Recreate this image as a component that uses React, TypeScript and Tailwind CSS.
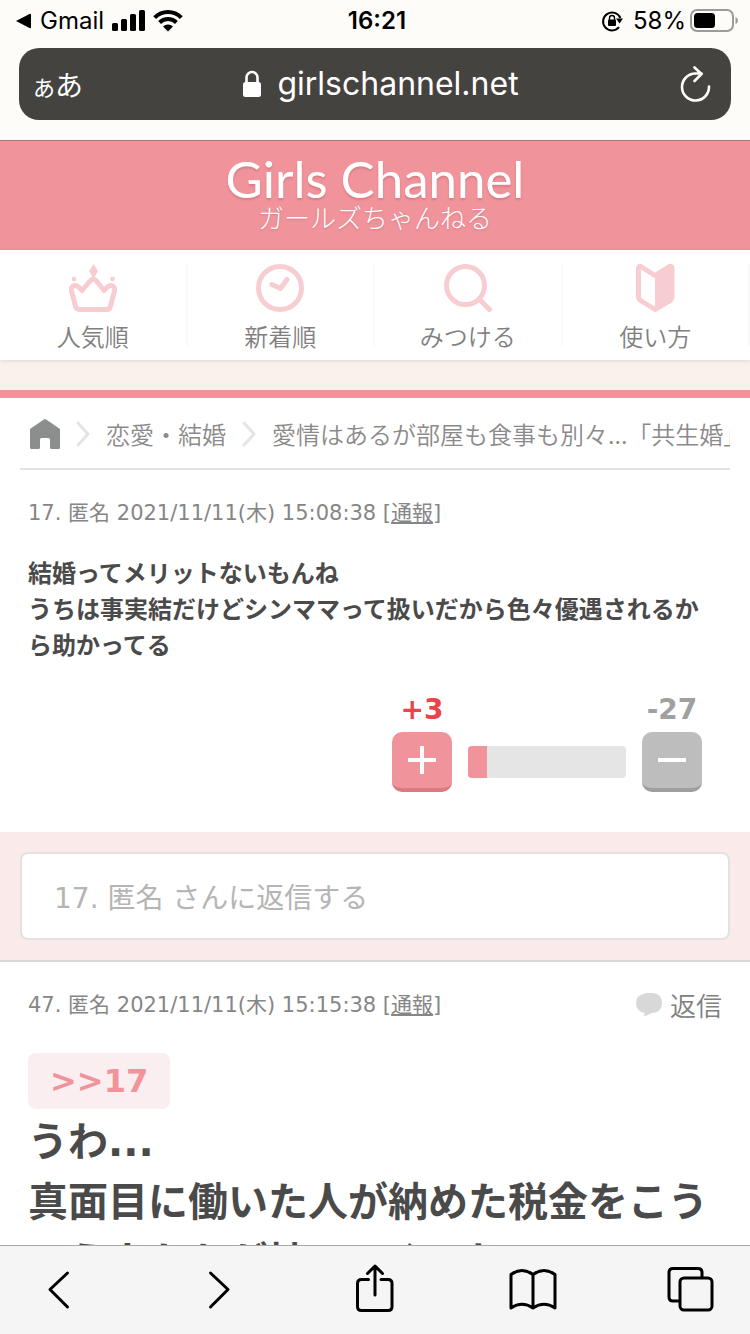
import type { ReactNode } from 'react';

const SYSTEM_FONT = "font-['Inter','Noto_Sans_CJK_JP',sans-serif]";
const SITE_FONT = "font-['DejaVu_Sans','Noto_Sans_CJK_JP',sans-serif]";
const THIN_FONT = "font-['Noto_Sans_CJK_JP',sans-serif] font-[350]";

interface CommentMetaProps {
  number: number;
  date: string;
}

interface NavItemProps {
  label: string;
  children: ReactNode;
}

interface ToolButtonProps {
  label: string;
  children: ReactNode;
}

function StatusBar() {
  return (
    <div className="grid h-10 grid-cols-3 items-center pt-0.5 pr-3 pl-4 text-2xl text-black">
      <div className="flex items-center">
        <svg className="mr-2 h-4 w-4" viewBox="0 0 16 16">
          <path d="M0 8 13.500 1Q15 0 15 2V14Q15 16 13.500 15Z" />
        </svg>
        <span>Gmail</span>
        <svg className="ml-2 h-6 w-[33px]" viewBox="0 0 33 24">
          <rect x="0" y="14" width="6" height="8" rx="1.500" />
          <rect x="9" y="10" width="6" height="12" rx="1.500" />
          <rect x="18" y="5" width="6" height="17" rx="1.500" />
          <rect x="27" y="1" width="6" height="21" rx="1.500" />
        </svg>
        <svg className="ml-2 h-6 w-[30px]" viewBox="0 0 30 24">
          <g fill="none" stroke="#000" strokeWidth="4">
            <path d="M1.700 8.600a18.800 18.800 0 0 1 26.600 0" />
            <path d="M6.600 13.500a12 12 0 0 1 16.800 0" />
          </g>
          <path d="M10 17.500a7.400 7.400 0 0 1 10 0L15 22.500Z" />
        </svg>
      </div>
      <time className="text-center font-semibold">16:21</time>
      <div className="flex items-center justify-end">
        <svg className="mr-2 h-6 w-6" viewBox="0 0 24 24">
          <path
            d="M18 18.200A9 9 0 1 1 19.400 9"
            fill="none"
            stroke="#000"
            strokeWidth="2"
          />
          <path d="M15 9.500h7l-3.500 5z" />
          <rect x="7" y="10.500" width="8" height="6.500" rx="1" />
          <path
            d="M8.500 11V9a2.500 2.500 0 0 1 5 0v2"
            fill="none"
            stroke="#000"
            strokeWidth="1.400"
          />
        </svg>
        <span className="mr-1">58%</span>
        <svg className="h-6 w-12" viewBox="0 0 48 24">
          <rect
            x="1"
            y="1"
            width="42"
            height="21"
            rx="6"
            fill="none"
            stroke="#9b9b99"
            strokeWidth="2"
          />
          <rect x="4" y="4" width="21" height="15" rx="3.500" />
          <path d="M45.500 8v7q2.500-1 2.500-3.500t-2.500-3.500" fill="#9b9b99" />
        </svg>
      </div>
    </div>
  );
}

function AddressBar() {
  return (
    <div className="mx-[19px] mt-2 mb-5 flex h-[72px] items-center justify-between rounded-[20px] bg-[#45433f] pr-5 pl-3.5 text-white">
      <button
        type="button"
        aria-label="表示設定"
        className="font-['Noto_Sans_CJK_JP',sans-serif]"
      >
        <span className="text-[22px]">あ</span>
        <span className="text-[28px]">あ</span>
      </button>
      <div className="flex items-center gap-4 text-[32px]">
        <svg className="h-7 w-[18px]" viewBox="0 0 18 28">
          <rect y="12" width="18" height="15" rx="2.500" fill="#fff" />
          <path
            d="M3.500 13V7.500a5.500 5.500 0 0 1 11 0V13"
            fill="none"
            stroke="#fff"
            strokeWidth="2.600"
          />
        </svg>
        <span>girlschannel.net</span>
      </div>
      <button type="button" aria-label="再読み込み">
        <svg
          className="h-9 w-8"
          viewBox="0 0 32 36"
          fill="none"
          stroke="#fff"
          strokeWidth="2.600"
          strokeLinecap="round"
          strokeLinejoin="round"
        >
          <path d="M30 20.500A13.500 13.500 0 1 1 16.500 7.500H22.500" />
          <path d="m15.500 1.500 7 6.500-7 7" />
        </svg>
      </button>
    </div>
  );
}

function NavItem({ label, children }: NavItemProps) {
  return (
    <a
      href="#"
      className="flex flex-1 flex-col items-center border-r-2 border-[#f9f9f9]"
    >
      <svg
        className="h-12 w-12 shrink-0"
        viewBox="0 0 48 48"
        fill="none"
        stroke="#f7cdd1"
        strokeWidth="5"
        strokeLinecap="round"
        strokeLinejoin="round"
      >
        {children}
      </svg>
      <span
        className={`mt-2 text-2xl leading-8 text-[#808080] ${THIN_FONT}`}
      >
        {label}
      </span>
    </a>
  );
}

function SiteHeader() {
  return (
    <header>
      <a
        href="#"
        className="flex h-[110px] flex-col items-center border-t border-[#b0747a] bg-[#f0939b] pt-3 text-white"
      >
        <span className="font-['Lato',sans-serif] text-[51px] leading-[52px] [text-shadow:0_2px_2px_rgba(150,60,70,0.25)]">
          Girls Channel
        </span>
        <span className="font-['Noto_Sans_CJK_JP',sans-serif] text-[26px] leading-6 font-light [text-shadow:0_1px_2px_rgba(150,60,70,0.25)]">
          ガールズちゃんねる
        </span>
      </a>
      <nav className="relative flex h-[110px] bg-white py-[14px] shadow-[0_1px_4px_rgba(0,40,40,0.12)]">
        <NavItem label="人気順">
          <path d="M6.500 42 2.500 27C1.500 22 6 20 9.500 23L13 26.500 21 17Q24.300 13 27.500 17L35 26.500 38.500 23C42 20 46.500 22 45.500 27L41.500 42Q40.800 45.500 37.500 45.500H10.500Q7.300 45.500 6.500 42Z" />
          <g fill="#f7cdd1" stroke="none">
            <path d="m24.500 0 4.500 7-4.500 8-4.500-8Z" />
            <circle cx="5" cy="15" r="2.300" />
            <circle cx="43.500" cy="15" r="2.300" />
          </g>
        </NavItem>
        <NavItem label="新着順">
          <circle cx="24" cy="24" r="21.500" />
          <path d="m16 20.500 8.500 4L31 15.500" />
        </NavItem>
        <NavItem label="みつける">
          <circle cx="21.500" cy="21.500" r="19" />
          <path d="m36 36 9.500 9.500" />
        </NavItem>
        <NavItem label="使い方">
          <path d="M7.500 4.500Q7.500 1 10.500 3L24 11.500 37.500 3Q41 1 41 4.500V33Q41 35 39 36.500L24 45.500 9.500 36.500Q7.500 35 7.500 33Z" />
          <path
            d="M24 11.500 37.500 3Q41 1 41 4.500V33Q41 35 39 36.500L24 45.500Z"
            fill="#f7cdd1"
            stroke="none"
          />
        </NavItem>
      </nav>
    </header>
  );
}

function Separator() {
  return (
    <svg
      className="mx-4 h-[26px] w-[14px] shrink-0"
      viewBox="0 0 14 26"
      fill="none"
      stroke="#e4e4e4"
      strokeWidth="3"
      strokeLinecap="round"
      strokeLinejoin="round"
    >
      <path d="m2 2 10 11L2 24" />
    </svg>
  );
}

function Breadcrumb() {
  return (
    <nav
      className={`mx-5 flex h-[72px] items-center overflow-hidden border-b-2 border-[#e2e2e2] pt-0.5 pl-[10px] text-2xl whitespace-nowrap text-[#8a8a8a] ${THIN_FONT}`}
    >
      <a href="#" aria-label="ホーム" className="shrink-0">
        <svg className="h-[30px] w-[30px]" viewBox="0 0 30 30" fill="#8b8e8c">
          <path d="M13.800.5Q15-.5 16.200.5L30 10V28.500Q30 30 28.500 30H21.500Q20 30 20 28.500V20.500Q20 19 18.500 19H11.500Q10 19 10 20.500V28.500Q10 30 8.500 30H1.500Q0 30 0 28.500V10Z" />
        </svg>
      </a>
      <Separator />
      <a href="#">恋愛・結婚</a>
      <Separator />
      <span>愛情はあるが部屋も食事も別々...「共生婚」</span>
    </nav>
  );
}

function CommentMeta({ number, date }: CommentMetaProps) {
  return (
    <p className="text-[21px] leading-8 text-[#868686]">
      {number}. 匿名 {date} [
      <a href="#" className="underline underline-offset-2">
        通報
      </a>
      ]
    </p>
  );
}

function VoteBar({ plus, minus }: { plus: number; minus: number }) {
  return (
    <div className="mt-6 flex items-end justify-end gap-4 pr-5">
      <div className="flex w-[60px] flex-col items-center">
        <span className="text-[28px] leading-[44px] font-bold text-[#ea4448]">
          +{plus}
        </span>
        <button
          type="button"
          aria-label="プラス"
          className="flex h-[60px] w-full items-center justify-center rounded-[10px] border-b-4 border-[#dc7a81] bg-[#f0939b]"
        >
          <svg className="h-7 w-7" viewBox="0 0 28 28" fill="#fff">
            <path d="M12 0h4v12h12v4H16v12h-4V16H0v-4h12z" />
          </svg>
        </button>
      </div>
      <div className="mb-[14px] flex h-8 w-[158px] overflow-hidden rounded bg-[#e5e5e5]">
        <div className="w-[12%] bg-[#f0939b]" />
      </div>
      <div className="flex w-[60px] flex-col items-center">
        <span className="text-[28px] leading-[44px] font-bold text-[#a0a0a0]">
          -{minus}
        </span>
        <button
          type="button"
          aria-label="マイナス"
          className="flex h-[60px] w-full items-center justify-center rounded-[10px] border-b-4 border-[#9e9e9e] bg-[#bdbdbd]"
        >
          <svg className="h-7 w-7" viewBox="0 0 28 28" fill="#fff">
            <path d="M0 12h28v4H0z" />
          </svg>
        </button>
      </div>
    </div>
  );
}

function ToolButton({ label, children }: ToolButtonProps) {
  return (
    <button type="button" aria-label={label}>
      <svg
        className="h-12 w-12"
        viewBox="0 0 48 48"
        fill="none"
        stroke="#000"
        strokeWidth="3"
        strokeLinecap="round"
        strokeLinejoin="round"
      >
        {children}
      </svg>
    </button>
  );
}

function Toolbar() {
  return (
    <footer className="flex shrink-0 items-start justify-between border-t border-[#a9a9a9] bg-[#f5f5f5] px-[35px] pt-[18px] pb-[22px]">
      <ToolButton label="戻る">
        <path d="M32.500 9 15 25.500 32.500 43" />
      </ToolButton>
      <ToolButton label="進む">
        <path d="m17.500 9 17.500 16.500L17.500 43" />
      </ToolButton>
      <ToolButton label="共有">
        <path d="M17.500 15.500H10.500Q6.500 15.500 6.500 19.500V42.500Q6.500 46.500 10.500 46.500H37Q41 46.500 41 42.500V19.500Q41 15.500 37 15.500H30" />
        <path d="M24 31V2M16.500 9.500 24 2 31.500 9.500" />
      </ToolButton>
      <ToolButton label="ブックマーク">
        <path d="M24 10.500Q13 2.500 2 10.500V44Q13 36.500 24 44Q35 36.500 46 44V10.500Q35 2.500 24 10.500V44" />
      </ToolButton>
      <ToolButton label="タブ">
        <path d="M35 13V8.500Q35 4.500 31 4.500H6Q2 4.500 2 8.500V33Q2 37 6 37H12" />
        <rect x="13" y="14" width="32" height="32" rx="4" />
      </ToolButton>
    </footer>
  );
}

export default function App() {
  return (
    <div className="flex h-screen flex-col bg-white">
      <div className={`shrink-0 bg-[#fdfcf9] ${SYSTEM_FONT}`}>
        <StatusBar />
        <AddressBar />
      </div>

      <div className={`min-h-0 flex-1 overflow-hidden ${SITE_FONT}`}>
        <SiteHeader />
        <div className="h-[30px] bg-[#f9f1ea]" />
        <main className="border-t-8 border-[#f0939b]">
          <Breadcrumb />

          <article className="px-7 pt-[27px] pb-10">
            <CommentMeta number={17} date="2021/11/11(木) 15:08:38" />
            <p className="mt-[27px] text-2xl leading-9 font-bold text-[#4a4a4a]">
              結婚ってメリットないもんね
              <br />
              うちは事実結だけどシンママって扱いだから色々優遇されるから助かってる
            </p>
            <VoteBar plus={3} minus={27} />
          </article>

          <form className="border-b-2 border-[#d8d8d8] bg-[#fbeaea] p-5">
            <input
              type="text"
              aria-label="返信"
              placeholder="17. 匿名 さんに返信する"
              className="h-[88px] w-full rounded-lg border-2 border-[#e2e2e2] bg-white px-8 pt-1 text-[28px] placeholder:text-[#b5b5b5]"
            />
          </form>

          <article className="px-7 pt-[27px]">
            <div className="flex items-center justify-between">
              <CommentMeta number={47} date="2021/11/11(木) 15:15:38" />
              <button
                type="button"
                className={`flex items-center gap-2 text-[26px] leading-8 text-[#808080] ${THIN_FONT}`}
              >
                <svg className="h-6 w-[26px]" viewBox="0 0 26 24" fill="#d8d8d8">
                  <path d="M10 0H16Q26 .5 26 10T16 20L8 23.500 8.500 20Q0 18 0 10T10 0Z" />
                </svg>
                返信
              </button>
            </div>
            <a
              href="#"
              className="mt-8 inline-flex h-14 items-center rounded-lg bg-[#fbeef0] px-[22px] text-[32px] leading-[56px] font-bold text-[#f0939b]"
            >
              &gt;&gt;17
            </a>
            <p className="mt-[3px] text-[40px] leading-[60px] font-bold text-[#4a4a4a]">
              うわ...
              <br />
              真面目に働いた人が納めた税金をこういう人たちが持ってくのね
            </p>
          </article>
        </main>
      </div>

      <Toolbar />
    </div>
  );
}
